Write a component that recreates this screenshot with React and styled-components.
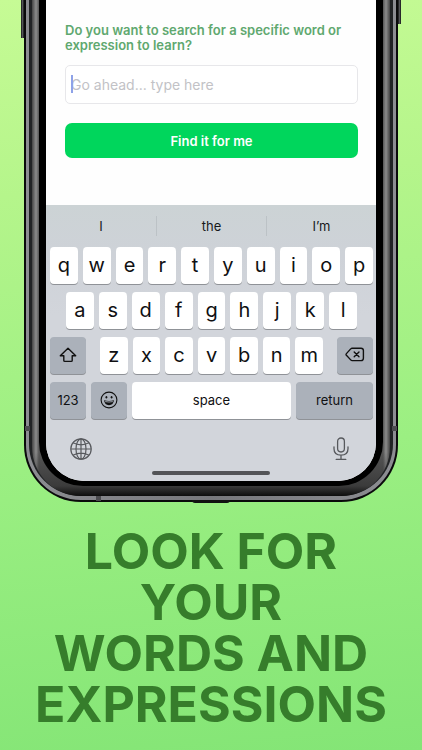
import React from 'react';
import styled, { createGlobalStyle } from 'styled-components';

const Global = createGlobalStyle`
  *, *::before, *::after { box-sizing: border-box; }
  body { margin: 0; background: #86e577; font-family: Inter, "Liberation Sans", sans-serif; }
  button, input { font: inherit; border: 0; margin: 0; padding: 0; }
`;

const Page = styled.main`
  min-height: 100vh;
  overflow: hidden;
  background: linear-gradient(175deg, #c6fb95 0%, #b5f58b 25%, #9bef82 60%, #84e576 100%);
`;

const Phone = styled.section`
  position: relative;
  margin: 0 24px;
  padding: 0 2px 2px;
  background: #0a0a0b;
  border-radius: 0 0 57px 57px;
`;

const SideButton = styled.span`
  position: absolute;
  top: 0;
  width: 3px;
  background: linear-gradient(90deg, #111, #55565a, #111);
  ${(p) => (p.$right ? 'right: -3px;' : 'left: -3px;')}
  height: ${(p) => (p.$right ? 24 : 38)}px;
`;

const Band = styled.span`
  position: absolute;
  width: 5px;
  height: 5px;
  background: #4c4c50;
  ${(p) => (p.$side === 'bottom' ? 'bottom: 1px; left: 72px;' : `${p.$side}: 1px; bottom: 71px;`)}
`;

const Port = styled.span`
  position: absolute;
  bottom: -1px;
  left: 168px;
  right: 168px;
  height: 3px;
  border-radius: 0 0 3px 3px;
  background: #111;
`;

const Rim = styled.div`
  padding: 0 3px 4px;
  background: linear-gradient(90deg, #8c8d92, #77787c 50%, #8c8d92);
  border-radius: 0 0 55px 55px;
`;

const Groove = styled.div`
  padding: 0 3px 0;
  background: #212325;
  border-radius: 0 0 52px 52px;
`;

const Steel = styled.div`
  padding: 0 7px 10px;
  border-radius: 0 0 49px 49px;
  background:
    linear-gradient(0deg, #0d0d0d 0, #3b3b3b 10px, rgba(60, 60, 60, 0) 44px),
    linear-gradient(90deg, #444 0, #8c8c8c 4px, #555 7px, #555 calc(100% - 7px), #8c8c8c calc(100% - 4px), #444 100%);
`;

const Bezel = styled.div`
  padding: 0 7px 5px;
  background: #000;
  border-radius: 0 0 44px 44px;
`;

const Screen = styled.div`
  overflow: hidden;
  background: #fefefe;
  border-radius: 0 0 38px 38px;
`;

const SearchForm = styled.form`
  display: flex;
  flex-direction: column;
  padding: 23px 18px 47px 19px;
`;

const Question = styled.label`
  margin-bottom: 12px;
  color: #5fa86f;
  font-size: 13px;
  font-weight: 600;
  line-height: 15px;
`;

const InputWrap = styled.div`
  position: relative;
  margin-bottom: 19px;
`;

const WordInput = styled.input`
  display: block;
  width: 100%;
  height: 39px;
  padding: 0 5px;
  border: 1px solid #e7e7ea;
  border-radius: 5px;
  background: #fff;
  font-size: 14px;
  caret-color: #5271d8;
  outline: 0;
  &::placeholder { color: #c2c2c6; opacity: 1; }
`;

const Caret = styled.span`
  position: absolute;
  left: 6px;
  top: 10px;
  width: 2px;
  height: 18px;
  background: #8ea2e8;
`;

const FindButton = styled.button`
  height: 35px;
  border-radius: 7px;
  background: #00d65c;
  color: #fff;
  font-size: 13px;
  font-weight: 600;
`;

const Keyboard = styled.div`
  padding-bottom: 6px;
  background: linear-gradient(#ccd3d5 0, #ced2d8 50px, #d2d5db 110px);
`;

const Suggestions = styled.div`
  display: grid;
  grid-template-columns: repeat(3, 1fr);
  padding: 11px 0;
`;

const Suggestion = styled.button`
  height: 20px;
  background: transparent;
  color: #17191b;
  font-size: 13px;
  & + & { border-left: 1px solid #bcc2c6; }
`;

const Keys = styled.div`
  display: grid;
  gap: 8px;
  padding: 0 3px 0 4px;
`;

const KeyRow = styled.div`
  display: flex;
  gap: 5px;
  padding: 0 ${(p) => p.$inset || 0}px;
`;

const Key = styled.button`
  display: flex;
  align-items: center;
  justify-content: center;
  flex: ${(p) => (p.$width ? `0 0 ${p.$width}px` : '1 1 0')};
  min-width: 0;
  height: 37px;
  padding-bottom: 2px;
  border-radius: 4px;
  background: ${(p) => (p.$dark ? '#abb1ba' : '#fff')};
  box-shadow: 0 1px 0 #8f9297;
  color: #101012;
  font-size: ${(p) => (p.$small ? 13 : 20)}px;
`;

const Letters = styled.div`
  display: flex;
  flex: 1;
  gap: 5px;
  margin: 0 9px;
`;

const Footer = styled.div`
  display: flex;
  justify-content: space-between;
  padding: 18px 26px 0 23px;
`;

const IconButton = styled.button`
  display: flex;
  background: transparent;
  color: #57595d;
`;

const HomeBar = styled.div`
  width: 118px;
  height: 4px;
  margin: 10px auto 0;
  border-radius: 2px;
  background: #535457;
`;

const Headline = styled.h1`
  margin: 24px 0 0;
  color: #367d2b;
  font-size: 50px;
  font-weight: 700;
  line-height: 51px;
  text-align: center;
`;

const Line = styled.span`
  display: block;
  white-space: nowrap;
`;

const ShiftIcon = () => (
  <svg width="18" height="16" viewBox="0 0 18 16" fill="none" stroke="#111" strokeWidth="1.4" strokeLinejoin="round">
    <path d="M9 1.2 1.3 8.8h3.5v4.6q0 1 1 1h6.4q1 0 1-1V8.8h3.5Z" />
  </svg>
);

const DeleteIcon = () => (
  <svg width="20" height="15" viewBox="0 0 20 15" fill="none" stroke="#111" strokeWidth="1.4" strokeLinecap="round" strokeLinejoin="round">
    <path d="M7.2 1.2H16q2.4 0 2.4 2.4v7.6q0 2.4-2.4 2.4H7.2q-.9 0-1.5-.7L1.4 8.2q-.7-.8 0-1.6l4.3-4.7q.6-.7 1.5-.7Z" />
    <path d="m9.2 5 4.8 4.8M14 5 9.2 9.8" />
  </svg>
);

const EmojiIcon = () => (
  <svg width="18" height="18" viewBox="0 0 18 18" fill="none" stroke="#111" strokeWidth="1.1">
    <circle cx="9" cy="9" r="7.9" />
    <ellipse cx="6.4" cy="6.3" rx=".9" ry="1.3" fill="#111" stroke="none" />
    <ellipse cx="11.6" cy="6.3" rx=".9" ry="1.3" fill="#111" stroke="none" />
    <path d="M4 9.3q5 1.2 10 0-.7 4.9-5 4.9T4 9.3Z" fill="#111" stroke="none" />
    <path d="M5.2 10.6q3.8.8 7.6 0" stroke="#abb1ba" strokeWidth=".9" />
  </svg>
);

const GlobeIcon = () => (
  <svg width="24" height="24" viewBox="0 0 24 24" fill="none" stroke="currentColor" strokeWidth="1.2">
    <circle cx="12" cy="12" r="10.2" />
    <ellipse cx="12" cy="12" rx="5" ry="10.2" />
    <path d="M12 1.8v20.4M1.8 12h20.4M4 5.8q8 4 16 0M4 18.2q8-4 16 0" />
  </svg>
);

const MicIcon = () => (
  <svg width="18" height="24" viewBox="0 0 18 24" fill="none" stroke="currentColor" strokeWidth="1.3" strokeLinecap="round">
    <rect x="5.6" y="1" width="6.8" height="14" rx="3.4" />
    <path d="M2 9.8v2q0 6.4 7 6.4t7-6.4v-2M9 18.2v4.2M4.2 22.4h9.6" />
  </svg>
);

const letterKeys = (letters) => [...letters].map((c) => <Key key={c} type="button">{c}</Key>);

export default function App() {
  return (
    <>
      <Global />
      <Page>
        <Phone>
          <SideButton />
          <SideButton $right />
          <Port />
          <Rim>
            <Groove>
              <Steel>
                <Bezel>
                  <Screen>
                    <SearchForm onSubmit={(e) => e.preventDefault()}>
                      <Question htmlFor="word">Do you want to search for a specific word or expression to learn?</Question>
                      <InputWrap>
                        <WordInput id="word" placeholder="Go ahead... type here" />
                        <Caret />
                      </InputWrap>
                      <FindButton type="submit">Find it for me</FindButton>
                    </SearchForm>
                    <Keyboard>
                      <Suggestions>
                        <Suggestion type="button">I</Suggestion>
                        <Suggestion type="button">the</Suggestion>
                        <Suggestion type="button">I’m</Suggestion>
                      </Suggestions>
                      <Keys>
                        <KeyRow>{letterKeys('qwertyuiop')}</KeyRow>
                        <KeyRow $inset={16}>{letterKeys('asdfghjkl')}</KeyRow>
                        <KeyRow>
                          <Key type="button" $dark $small $width={36} aria-label="Shift"><ShiftIcon /></Key>
                          <Letters>{letterKeys('zxcvbnm')}</Letters>
                          <Key type="button" $dark $small $width={36} aria-label="Delete"><DeleteIcon /></Key>
                        </KeyRow>
                        <KeyRow>
                          <Key type="button" $dark $small $width={36}>123</Key>
                          <Key type="button" $dark $small $width={36} aria-label="Emoji"><EmojiIcon /></Key>
                          <Key type="button" $small>space</Key>
                          <Key type="button" $dark $small $width={77}>return</Key>
                        </KeyRow>
                      </Keys>
                      <Footer>
                        <IconButton type="button" aria-label="Next keyboard"><GlobeIcon /></IconButton>
                        <IconButton type="button" aria-label="Dictate"><MicIcon /></IconButton>
                      </Footer>
                      <HomeBar />
                    </Keyboard>
                  </Screen>
                </Bezel>
              </Steel>
            </Groove>
          </Rim>
          <Band $side="left" />
          <Band $side="right" />
          <Band $side="bottom" />
        </Phone>
        <Headline>
          <Line>LOOK FOR</Line>
          <Line>YOUR</Line>
          <Line>WORDS AND</Line>
          <Line>EXPRESSIONS</Line>
        </Headline>
      </Page>
    </>
  );
}
